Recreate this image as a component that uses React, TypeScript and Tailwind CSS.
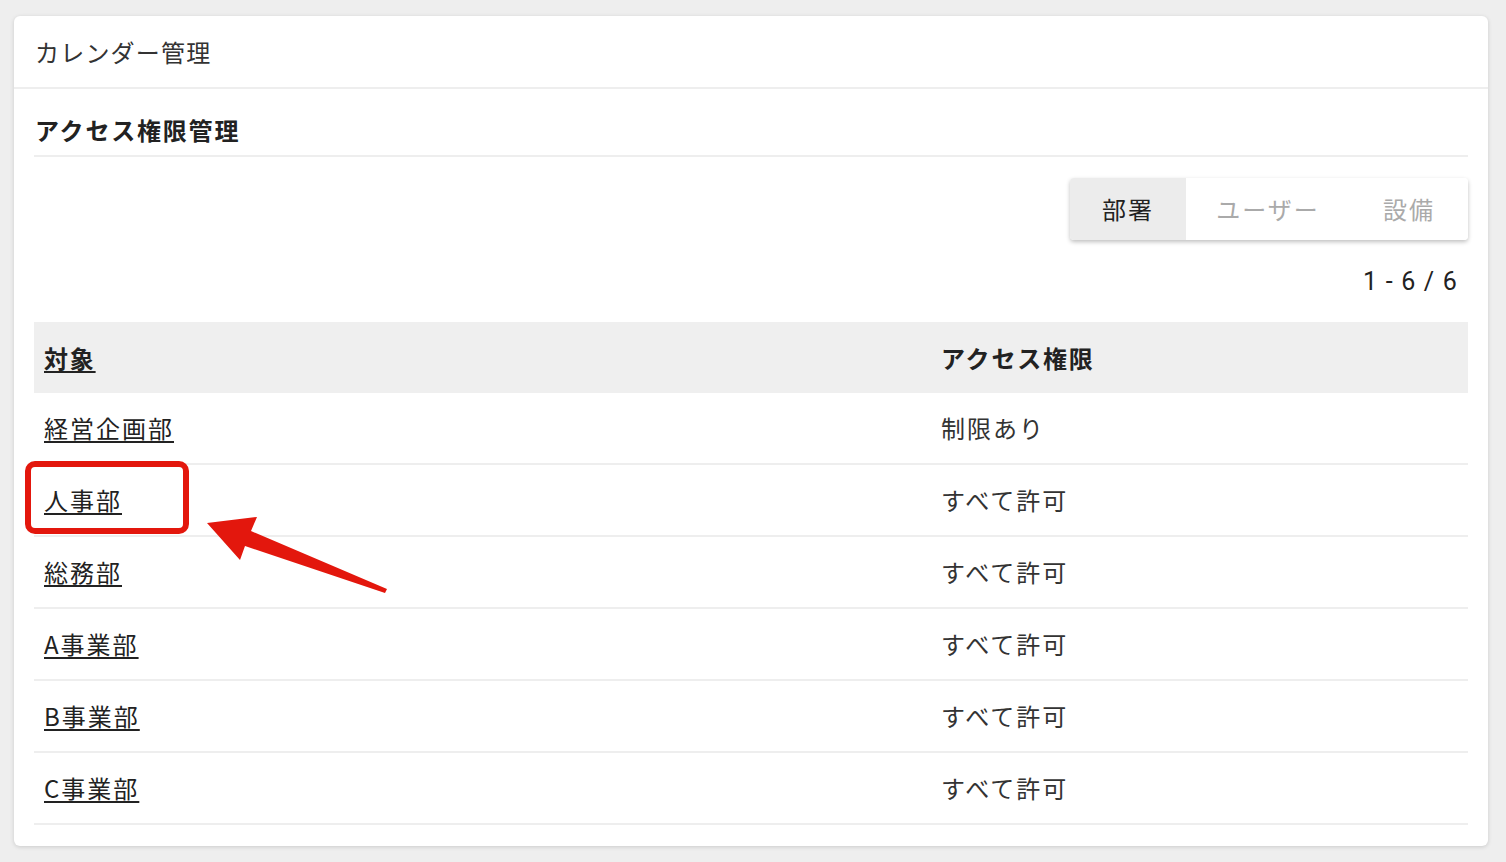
import React from "react";

const rows: [string, string][] = [
  ["経営企画部", "制限あり"],
  ["人事部", "すべて許可"],
  ["総務部", "すべて許可"],
  ["A事業部", "すべて許可"],
  ["B事業部", "すべて許可"],
  ["C事業部", "すべて許可"],
];

export default function App() {
  return (
    <div
      className="relative w-[1506px] h-[862px] bg-[#eeeeee] overflow-hidden pt-[16px] pl-[14px]"
      style={{ fontFamily: '"Noto Sans CJK JP", "Noto Sans", sans-serif' }}
    >
      <div className="w-[1474px] h-[830px] bg-white rounded-[6px] shadow-[0_1px_4px_rgba(0,0,0,0.15)] text-[#333]">
        <div className="h-[73px] px-[21px] flex items-center text-[24px] tracking-[1.2px] text-[#333] border-b-2 border-[#eeeeee]">
          カレンダー管理
        </div>
        <div className="px-[20px] pb-[21px]">
          <div className="pt-[24px] pb-[8px] leading-[34px] text-[24px] tracking-[1.8px] font-bold text-[#222] border-b-2 border-[#eeeeee] pl-px">
            アクセス権限管理
          </div>
          <div className="mt-[21px] flex justify-end">
            <div className="flex h-[62px] rounded-[4px] overflow-hidden shadow-[0_2px_4px_rgba(0,0,0,0.25)] text-[24px] tracking-[2px]">
              <div className="w-[116px] flex items-center justify-center bg-[#ececec] text-[#222]">部署</div>
              <div className="w-[164px] flex items-center justify-center bg-white text-[#aaaaaa]">ユーザー</div>
              <div className="w-[118px] flex items-center justify-center bg-white text-[#aaaaaa]">設備</div>
            </div>
          </div>
          <div
            className="mt-[25px] mb-[23px] h-[34px] leading-[34px] text-right pr-[10px] text-[25px] tracking-[1.2px] text-[#222]"
            style={{ fontFamily: 'Roboto, "Noto Sans CJK JP", sans-serif' }}
          >
            1 - 6 / 6
          </div>
          <div>
            <div className="grid grid-cols-[897px_1fr] h-[71px] bg-[#efefef] items-center text-[24px] tracking-[1.8px] font-bold text-[#222]">
              <div className="pl-[10px]">
                <span className="underline decoration-2 underline-offset-[3px]">対象</span>
              </div>
              <div className="pl-[10px]">アクセス権限</div>
            </div>
            {rows.map(([a, b]) => (
              <div
                key={a}
                className="grid grid-cols-[897px_1fr] h-[72px] items-center text-[24px] tracking-[2px] text-[#333] border-b-2 border-[#eeeeee]"
              >
                <div className="pl-[10px]">
                  <span className="underline decoration-2 underline-offset-[3px] text-[#222]">{a}</span>
                </div>
                <div className="pl-[10px]">{b}</div>
              </div>
            ))}
          </div>
        </div>
      </div>
      <svg className="absolute left-0 top-0 pointer-events-none" width="1506" height="862">
        <rect x="28" y="464" width="158" height="67" rx="7" ry="7" fill="none" stroke="#e3170d" strokeWidth="6" />
        <polygon
          points="207,523 257,517 251,531 387,589 385,593 245,546 240,560"
          fill="#e3170d"
        />
      </svg>
    </div>
  );
}
